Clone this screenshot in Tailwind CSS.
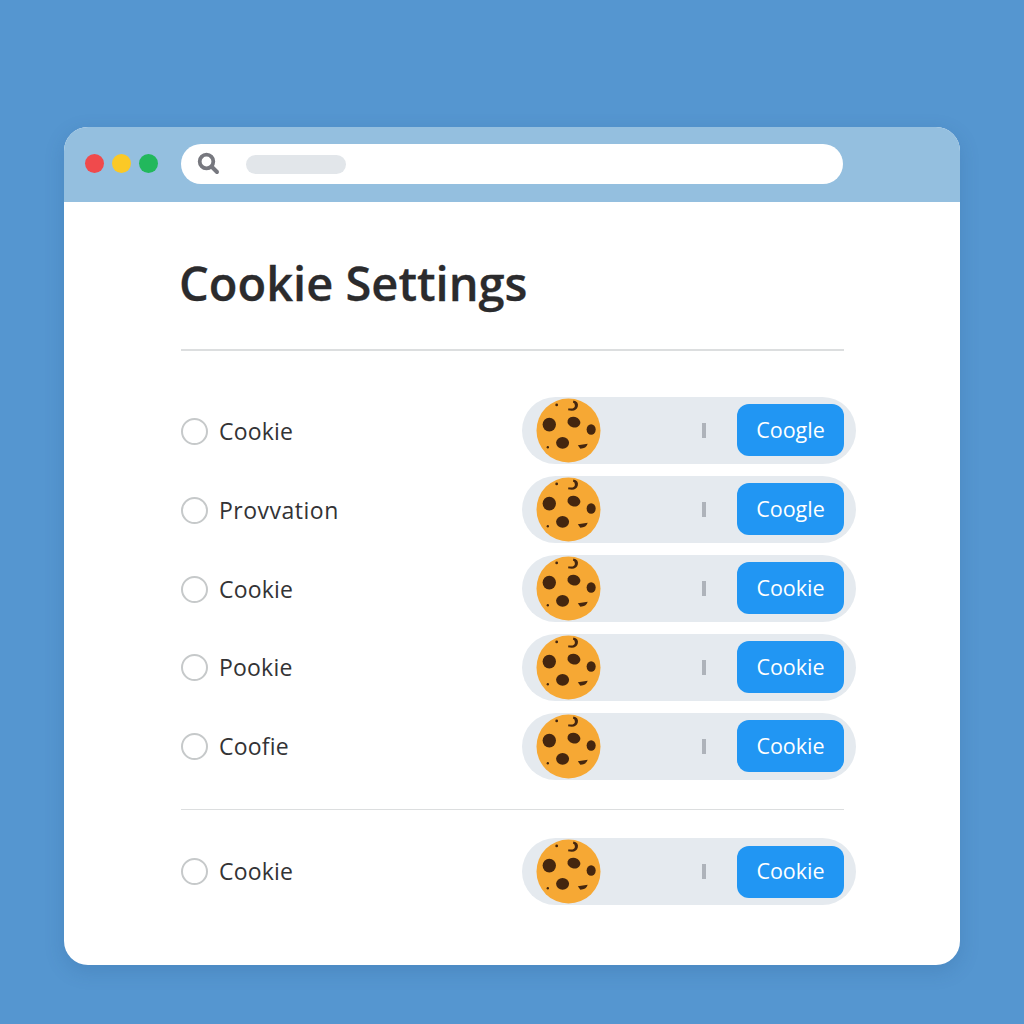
<!DOCTYPE html>
<html lang="en">
<head>
  <meta charset="UTF-8">
  <title>Cookie Settings</title>
  <script src="https://cdn.jsdelivr.net/npm/@tailwindcss/browser@4"></script>
</head>
<body class="w-[1024px] h-[1024px] overflow-hidden bg-[#5596d0] pt-[127px] pl-[64px] font-['Open_Sans',sans-serif]">
  <svg width="0" height="0" class="absolute">
    <symbol id="cookie" viewBox="0 0 66 66">
      <circle cx="33" cy="33" r="32.500" fill="#f6a834"/>
      <ellipse cx="13.500" cy="27" rx="6.800" ry="7" fill="#44260f"/>
      <ellipse cx="38.500" cy="24.500" rx="6.600" ry="5.300" transform="rotate(15 38.500 24.500)" fill="#44260f"/>
      <ellipse cx="56" cy="32" rx="4.600" ry="5.400" fill="#44260f"/>
      <ellipse cx="27" cy="45.500" rx="6.600" ry="6" fill="#44260f"/>
      <path d="M42.500 48 L52.500 46.500 Q51 51.500 45 51.500 Z" fill="#44260f"/>
      <path d="M38 2.500 Q43.500 3.500 42.500 8.500 Q41 14.500 32.500 12.500 L33 10.500 Q39.500 11.500 39.500 7.500 Q39.500 5 37.500 4.500 Z" fill="#44260f"/>
      <circle cx="21" cy="7" r="1.400" fill="#44260f"/>
      <circle cx="12" cy="50" r="1.200" fill="#44260f"/>
    </symbol>
  </svg>

  <div class="w-[896px] h-[838px] bg-white rounded-[24px] overflow-hidden shadow-[0_6px_20px_rgba(30,70,120,0.18)]">
    <div class="h-[75px] bg-[#94bfdf] flex items-start pt-[17px] pl-[21px]">
      <div class="flex gap-[8px] pt-[10px]">
        <div class="w-[19px] h-[19px] rounded-full bg-[#f04a4c]"></div>
        <div class="w-[19px] h-[19px] rounded-full bg-[#fbc926]"></div>
        <div class="w-[19px] h-[19px] rounded-full bg-[#22b85c]"></div>
      </div>
      <div class="ml-[23px] w-[662px] h-[40px] bg-white rounded-full flex items-center pl-[15px]">
        <svg width="24" height="24" viewBox="0 0 24 24" fill="none" stroke="#77787f">
          <circle cx="10.500" cy="9.500" r="6.800" stroke-width="3.800"/>
          <path d="M16 15 L21 20" stroke-width="4" stroke-linecap="round"/>
        </svg>
        <div class="ml-[26px] w-[100px] h-[19px] rounded-full bg-[#e2e6ea]"></div>
      </div>
    </div>

    <div class="pl-[117px] w-[780px]">
      <h1 class="pt-[51px] h-[147px] ml-[-2px] text-[47px] leading-[60px] font-semibold [-webkit-text-stroke:0.3px_#2b2b2d] text-[#2b2b2d]">Cookie Settings</h1>
      <div class="h-[1.500px] bg-[#dcdedf]"></div>

      <div class="pt-[46px] flex flex-col gap-[12px]">
        <div class="flex items-center justify-between h-[67px] mr-[-12px]">
          <div class="mt-[2px] flex items-center gap-[11px]">
            <div class="w-[27px] h-[27px] rounded-full border-2 border-[#c6c9ca]"></div>
            <span class="text-[23px] tracking-[0.2px] text-[#333335]">Cookie</span>
          </div>
          <div class="w-[334px] h-[67px] rounded-full bg-[#e5eaef] flex items-center pl-[14px] pr-[12px]">
            <svg width="65" height="65" class="shrink-0"><use href="#cookie"/></svg>
            <div class="ml-[101px] w-[4px] h-[15px] bg-[#aeb3ba]"></div>
            <div class="ml-[31px] w-[107px] h-[52px] rounded-[12px] bg-[#2196f3] text-white text-[21.500px] flex items-center justify-center">Coogle</div>
          </div>
        </div>

        <div class="flex items-center justify-between h-[67px] mr-[-12px]">
          <div class="mt-[2px] flex items-center gap-[11px]">
            <div class="w-[27px] h-[27px] rounded-full border-2 border-[#c6c9ca]"></div>
            <span class="text-[23px] tracking-[0.5px] text-[#333335]">Provvation</span>
          </div>
          <div class="w-[334px] h-[67px] rounded-full bg-[#e5eaef] flex items-center pl-[14px] pr-[12px]">
            <svg width="65" height="65" class="shrink-0"><use href="#cookie"/></svg>
            <div class="ml-[101px] w-[4px] h-[15px] bg-[#aeb3ba]"></div>
            <div class="ml-[31px] w-[107px] h-[52px] rounded-[12px] bg-[#2196f3] text-white text-[21.500px] flex items-center justify-center">Coogle</div>
          </div>
        </div>

        <div class="flex items-center justify-between h-[67px] mr-[-12px]">
          <div class="mt-[2px] flex items-center gap-[11px]">
            <div class="w-[27px] h-[27px] rounded-full border-2 border-[#c6c9ca]"></div>
            <span class="text-[23px] tracking-[0.2px] text-[#333335]">Cookie</span>
          </div>
          <div class="w-[334px] h-[67px] rounded-full bg-[#e5eaef] flex items-center pl-[14px] pr-[12px]">
            <svg width="65" height="65" class="shrink-0"><use href="#cookie"/></svg>
            <div class="ml-[101px] w-[4px] h-[15px] bg-[#aeb3ba]"></div>
            <div class="ml-[31px] w-[107px] h-[52px] rounded-[12px] bg-[#2196f3] text-white text-[21.500px] flex items-center justify-center">Cookie</div>
          </div>
        </div>

        <div class="flex items-center justify-between h-[67px] mr-[-12px]">
          <div class="flex items-center gap-[11px]">
            <div class="w-[27px] h-[27px] rounded-full border-2 border-[#c6c9ca]"></div>
            <span class="text-[23px] tracking-[0.2px] text-[#333335]">Pookie</span>
          </div>
          <div class="w-[334px] h-[67px] rounded-full bg-[#e5eaef] flex items-center pl-[14px] pr-[12px]">
            <svg width="65" height="65" class="shrink-0"><use href="#cookie"/></svg>
            <div class="ml-[101px] w-[4px] h-[15px] bg-[#aeb3ba]"></div>
            <div class="ml-[31px] w-[107px] h-[52px] rounded-[12px] bg-[#2196f3] text-white text-[21.500px] flex items-center justify-center">Cookie</div>
          </div>
        </div>

        <div class="flex items-center justify-between h-[67px] mr-[-12px]">
          <div class="flex items-center gap-[11px]">
            <div class="w-[27px] h-[27px] rounded-full border-2 border-[#c6c9ca]"></div>
            <span class="text-[23px] tracking-[0.2px] text-[#333335]">Coofie</span>
          </div>
          <div class="w-[334px] h-[67px] rounded-full bg-[#e5eaef] flex items-center pl-[14px] pr-[12px]">
            <svg width="65" height="65" class="shrink-0"><use href="#cookie"/></svg>
            <div class="ml-[101px] w-[4px] h-[15px] bg-[#aeb3ba]"></div>
            <div class="ml-[31px] w-[107px] h-[52px] rounded-[12px] bg-[#2196f3] text-white text-[21.500px] flex items-center justify-center">Cookie</div>
          </div>
        </div>
      </div>

      <div class="mt-[29px] h-[1.500px] bg-[#dcdedf]"></div>

      <div class="pt-[28px]">
        <div class="flex items-center justify-between h-[67px] mr-[-12px]">
          <div class="flex items-center gap-[11px]">
            <div class="w-[27px] h-[27px] rounded-full border-2 border-[#c6c9ca]"></div>
            <span class="text-[23px] tracking-[0.2px] text-[#333335]">Cookie</span>
          </div>
          <div class="w-[334px] h-[67px] rounded-full bg-[#e5eaef] flex items-center pl-[14px] pr-[12px]">
            <svg width="65" height="65" class="shrink-0"><use href="#cookie"/></svg>
            <div class="ml-[101px] w-[4px] h-[15px] bg-[#aeb3ba]"></div>
            <div class="ml-[31px] w-[107px] h-[52px] rounded-[12px] bg-[#2196f3] text-white text-[21.500px] flex items-center justify-center">Cookie</div>
          </div>
        </div>
      </div>
    </div>
  </div>
</body>
</html>
